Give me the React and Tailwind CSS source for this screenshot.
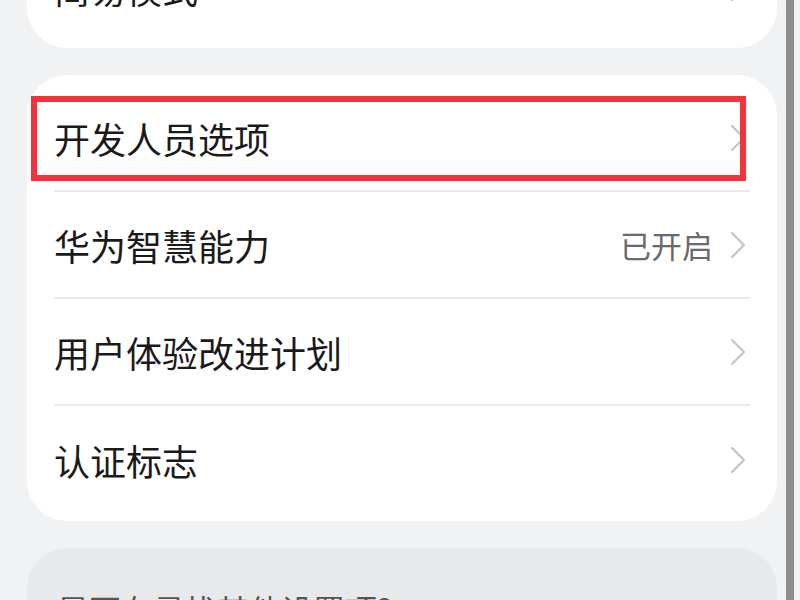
import React from "react";

const font = { fontFamily: '"Noto Sans CJK SC", "Noto Sans", sans-serif' };

function Chevron() {
  return (
    <svg width="16" height="28" viewBox="0 0 16 28" className="shrink-0">
      <polyline points="2,2 14,14 2,26" fill="none" stroke="#c6c6c6" strokeWidth="2.4" strokeLinecap="round" strokeLinejoin="round" />
    </svg>
  );
}

function Row({ label, value, last }) {
  return (
    <div className="h-[107px] flex flex-col">
      <div className="flex-1 flex items-center pl-[27px] pr-[31px]">
        <span className="text-[36px] leading-none text-[#1a1a1a] flex-1">{label}</span>
        {value && <span className="text-[31px] leading-none text-[#6a6a6a] mr-[17px]">{value}</span>}
        <Chevron />
      </div>
      {!last && <div className="ml-[27px] mr-[27px] h-[2px] bg-[#e9e9e9]" />}
    </div>
  );
}

export default function App() {
  return (
    <div className="w-[800px] h-[600px] overflow-hidden bg-[#f1f2f4] flex" style={font}>
      <div className="flex-1 pl-[27px] pr-[9px] flex flex-col">
        <div className="h-[48px] bg-white rounded-b-[40px] overflow-hidden flex items-end shrink-0">
          <div className="flex items-center pl-[27px] pr-[31px] w-full mb-[42px]">
            <span className="text-[36px] leading-none text-[#1a1a1a] flex-1">简易模式</span>
            <Chevron />
          </div>
        </div>
        <div className="mt-[27px] bg-white rounded-[40px] pt-[10px] pb-[8px] relative shrink-0">
          <Row label="开发人员选项" />
          <Row label="华为智慧能力" value="已开启" />
          <Row label="用户体验改进计划" />
          <Row label="认证标志" last />
          <div className="absolute left-[4px] top-[21px] w-[715px] h-[85px] border-[6px] border-[#f5323c]" />
        </div>
        <div className="mt-[27px] bg-[#e8e9eb] rounded-t-[40px] flex-1 pl-[30px] pt-[45px]">
          <span className="text-[32px] leading-none text-[#555555]">是否在寻找其他设置项?</span>
        </div>
      </div>
      <div className="w-[8px] bg-[#8e8e8e]" />
      <div className="w-[6px]" />
    </div>
  );
}
